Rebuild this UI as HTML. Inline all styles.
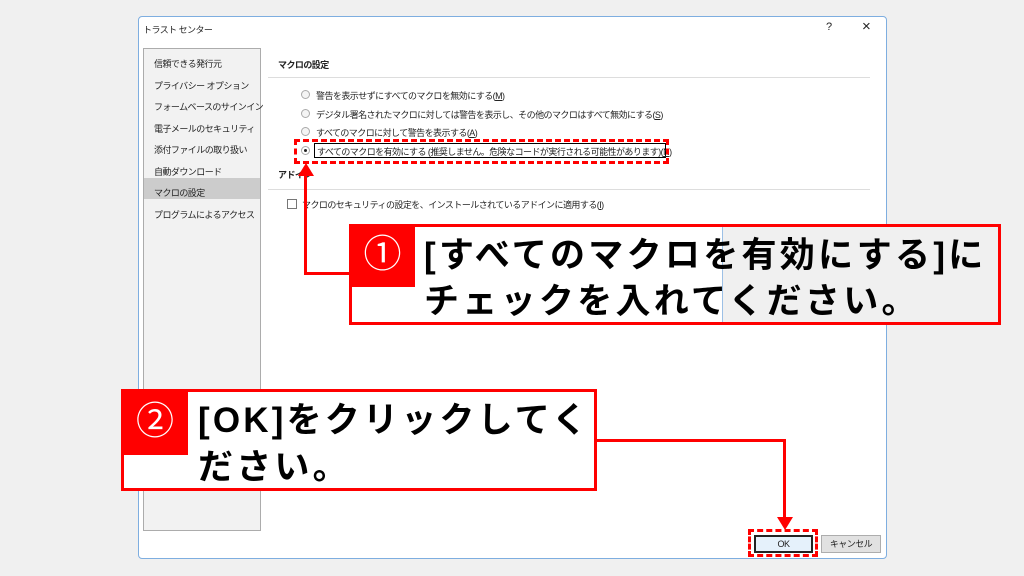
<!DOCTYPE html>
<html><head><meta charset="utf-8"><style>
*{margin:0;padding:0;box-sizing:border-box}
body{width:1024px;height:576px;background:#f0f0f0;position:relative;overflow:hidden;font-family:"Liberation Sans","Noto Sans CJK JP",sans-serif;font-size:9px;letter-spacing:-0.55px;color:#222}
.a{position:absolute;white-space:nowrap}
.dlg{left:138px;top:16px;width:749px;height:543px;background:#fff;border:1px solid #7eaee0;border-radius:4px}
.nav{left:143px;top:48px;width:118px;height:483px;background:#f2f2f2;border:1px solid #acacac}
.radio{width:9px;height:9px;border:1px solid #aaa;border-radius:50%;background:#f4f4f4}
.big{font-weight:bold;font-size:35px;color:#000;letter-spacing:3.3px}
.num{background:#f00;color:#fff;font-size:38px;text-align:center;font-weight:normal;letter-spacing:0}
</style></head><body>
<div class="a dlg"></div>
<div class="a" style="left:143px;top:23px">トラスト センター</div>
<div class="a" style="left:826px;top:21px;font-size:11px">?</div>
<div class="a" style="left:862px;top:18px;font-size:15px">×</div>
<div class="a nav"></div>
<div class="a" style="left:144px;top:178px;width:116px;height:21px;background:#ccc"></div>
<div class="a" style="left:154px;top:54px;line-height:21.5px;white-space:normal">信頼できる発行元<br>プライバシー オプション<br>フォームベースのサインイン<br>電子メールのセキュリティ<br>添付ファイルの取り扱い<br>自動ダウンロード<br>マクロの設定<br>プログラムによるアクセス</div>
<div class="a" style="left:278px;top:58px;font-weight:bold">マクロの設定</div>
<div class="a" style="left:268px;top:77px;width:602px;height:1px;background:#ddd"></div>
<div class="a radio" style="left:301px;top:90px"></div>
<div class="a radio" style="left:301px;top:109px"></div>
<div class="a radio" style="left:301px;top:127px"></div>
<div class="a radio" style="left:301px;top:146px;background:#fff"><div style="width:3px;height:3px;background:#222;border-radius:50%;margin:2px"></div></div>
<div class="a" style="left:316px;top:89px">警告を表示せずにすべてのマクロを無効にする(<u>M</u>)</div>
<div class="a" style="left:316px;top:108px">デジタル署名されたマクロに対しては警告を表示し、その他のマクロはすべて無効にする(<u>S</u>)</div>
<div class="a" style="left:316px;top:126px">すべてのマクロに対して警告を表示する(<u>A</u>)</div>
<div class="a" style="left:314px;top:143px;width:352px;height:15px;border:1px solid #000"></div>
<div class="a" style="left:317px;top:145px">すべてのマクロを有効にする (推奨しません。危険なコードが実行される可能性があります)(<u>N</u>)</div>
<div class="a" style="left:294px;top:139px;width:375px;height:25px;border:3px dashed #f00"></div>
<div class="a" style="left:278px;top:168px;font-weight:bold">アドイン</div>
<div class="a" style="left:268px;top:189px;width:602px;height:1px;background:#ddd"></div>
<div class="a" style="left:287px;top:199px;width:10px;height:10px;border:1px solid #777;background:#fff"></div>
<div class="a" style="left:302px;top:198px">マクロのセキュリティの設定を、インストールされているアドインに適用する(<u>I</u>)</div>
<div class="a" style="left:304px;top:172px;width:3px;height:103px;background:#f00"></div>
<div class="a" style="left:304px;top:272px;width:48px;height:3px;background:#f00"></div>
<svg class="a" style="left:298px;top:163px" width="16" height="14"><polygon points="8,0 0,13 16,13" fill="#f00"/></svg>
<div class="a" style="left:349px;top:224px;width:652px;height:101px;background:#fff;border:3px solid #f00"></div>
<div class="a" style="left:722px;top:227px;width:276px;height:95px;background:#f0f0f0;border-left:1px solid #9cc0e6"></div>
<div class="a num" style="left:350px;top:224px;width:65px;height:63px;line-height:63px">①</div>
<div class="a big" style="left:424px;top:227px">[すべてのマクロを有効にする]に</div>
<div class="a big" style="left:424px;top:273px">チェックを入れてください。</div>
<div class="a" style="left:754px;top:535px;width:59px;height:18px;background:#e5f1fb;border:2px solid #222;text-align:center;line-height:14px">OK</div>
<div class="a" style="left:821px;top:535px;width:60px;height:18px;background:#e1e1e1;border:1px solid #adadad;text-align:center;line-height:16px">キャンセル</div>
<div class="a" style="left:748px;top:529px;width:70px;height:28px;border:3px dashed #f00"></div>
<div class="a" style="left:595px;top:439px;width:191px;height:3px;background:#f00"></div>
<div class="a" style="left:783px;top:439px;width:3px;height:82px;background:#f00"></div>
<svg class="a" style="left:777px;top:517px" width="16" height="13"><polygon points="8,13 0,0 16,0" fill="#f00"/></svg>
<div class="a" style="left:121px;top:389px;width:476px;height:102px;background:#fff;border:3px solid #f00"></div>
<div class="a num" style="left:122px;top:390px;width:66px;height:65px;line-height:65px">②</div>
<div class="a big" style="left:198px;top:392px;letter-spacing:3.2px">[OK]をクリックしてく</div>
<div class="a big" style="left:198px;top:439px;letter-spacing:3.2px">ださい。</div>
</body></html>
